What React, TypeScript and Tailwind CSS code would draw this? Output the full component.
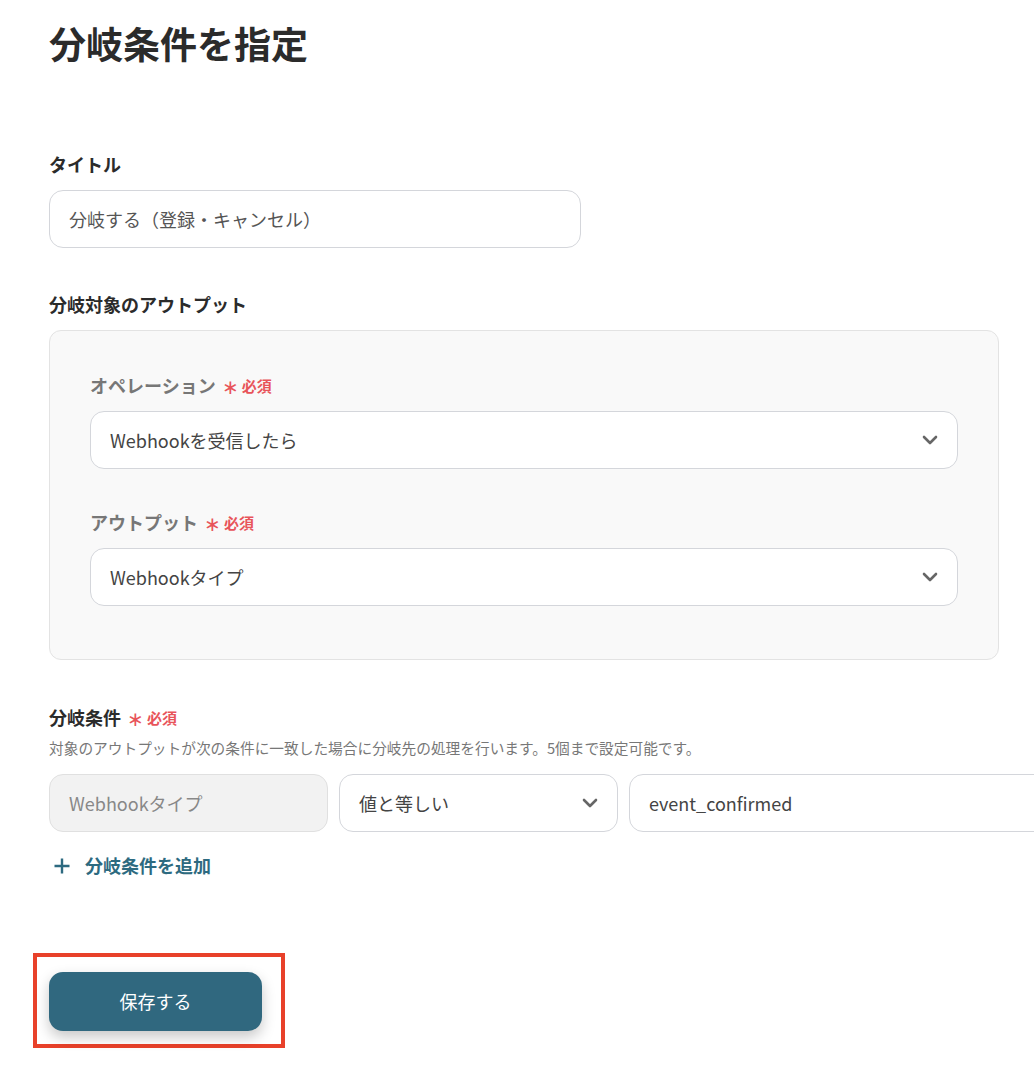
const font = { fontFamily: '"Noto Sans CJK JP", "Noto Sans", sans-serif' };

function Chevron() {
  return (
    <svg width="16" height="10" viewBox="0 0 16 10" className="shrink-0">
      <path d="M2 2l6 6 6-6" fill="none" stroke="#666" strokeWidth="2.6" strokeLinecap="round" strokeLinejoin="round" />
    </svg>
  );
}

function Required() {
  return (
    <span className="ml-[6px] inline-flex items-center text-[15px] font-bold text-[#e8545a]">
      <span className="mr-[3px] text-[20px] font-normal leading-none">∗</span>
      必須
    </span>
  );
}

function Select({ value }: { value: string }) {
  return (
    <div className="mt-[12px] flex h-[58px] items-center justify-between rounded-[14px] border border-[#d4d6db] bg-white pl-[19px] pr-[19px] text-[18px] text-[#444]">
      <span>{value}</span>
      <Chevron />
    </div>
  );
}

export default function App() {
  return (
    <div style={font} className="min-h-[1092px] w-[1034px] overflow-hidden bg-white pl-[49px] text-[#2b2b2b]">
      <h1 className="pt-[16px] text-[37px] font-bold leading-[54px]">分岐条件を指定</h1>

      <section className="mt-[81px]">
        <h2 className="text-[18px] font-bold leading-[27px]">タイトル</h2>
        <div className="mt-[12px] flex h-[58px] w-[532px] items-center rounded-[14px] border border-[#d4d6db] bg-white px-[19px] text-[18px] text-[#555]">
          分岐する（登録・キャンセル）
        </div>
      </section>

      <section className="mt-[43px]">
        <h2 className="text-[18px] font-bold leading-[27px]">分岐対象のアウトプット</h2>
        <div className="mt-[12px] w-[950px] rounded-[12px] border border-[#e3e3e3] bg-[#f9f9f9] px-[40px] pb-[53px] pt-[41px]">
          <div className="flex items-center text-[18px] font-bold leading-[27px] text-[#777]">
            オペレーション
            <Required />
          </div>
          <Select value="Webhookを受信したら" />
          <div className="mt-[40px] flex items-center text-[18px] font-bold leading-[27px] text-[#777]">
            アウトプット
            <Required />
          </div>
          <Select value="Webhookタイプ" />
        </div>
      </section>

      <section className="mt-[44px]">
        <div className="flex items-center text-[18px] font-bold leading-[27px]">
          分岐条件
          <Required />
        </div>
        <p className="mt-[6px] text-[14.7px] leading-[21px] text-[#777]">
          対象のアウトプットが次の条件に一致した場合に分岐先の処理を行います。5個まで設定可能です。
        </p>
        <div className="mt-[16px] flex w-[1100px] gap-[11px]">
          <div className="flex h-[58px] w-[279px] items-center rounded-[14px] border border-[#e0e0e0] bg-[#f2f2f2] px-[19px] text-[18px] text-[#888]">
            Webhookタイプ
          </div>
          <div className="flex h-[58px] w-[279px] items-center justify-between rounded-[14px] border border-[#d4d6db] bg-white px-[19px] text-[18px] text-[#444]">
            <span>値と等しい</span>
            <Chevron />
          </div>
          <div className="flex h-[58px] w-[440px] items-center rounded-[14px] border border-[#d4d6db] bg-white px-[19px] text-[18px] text-[#444]">
            event_confirmed
          </div>
        </div>
        <button className="mt-[20px] flex items-center text-[18px] font-bold leading-[27px] text-[#2d6a80]">
          <svg width="18" height="18" viewBox="0 0 18 18" className="ml-[4px] mr-[14px]">
            <path d="M9 1.5v15M1.5 9h15" stroke="#2d6a80" strokeWidth="2.4" />
          </svg>
          分岐条件を追加
        </button>
      </section>

      <div className="-ml-[16px] mt-[74px] w-fit border-[4px] border-[#e8412a] pb-[13px] pl-[12px] pr-[19px] pt-[15px]">
        <button className="flex h-[59px] w-[213px] items-center justify-center rounded-[14px] bg-[#30687f] text-[18px] text-white shadow-[0_6px_14px_rgba(0,0,0,0.22)]">
          保存する
        </button>
      </div>
    </div>
  );
}
